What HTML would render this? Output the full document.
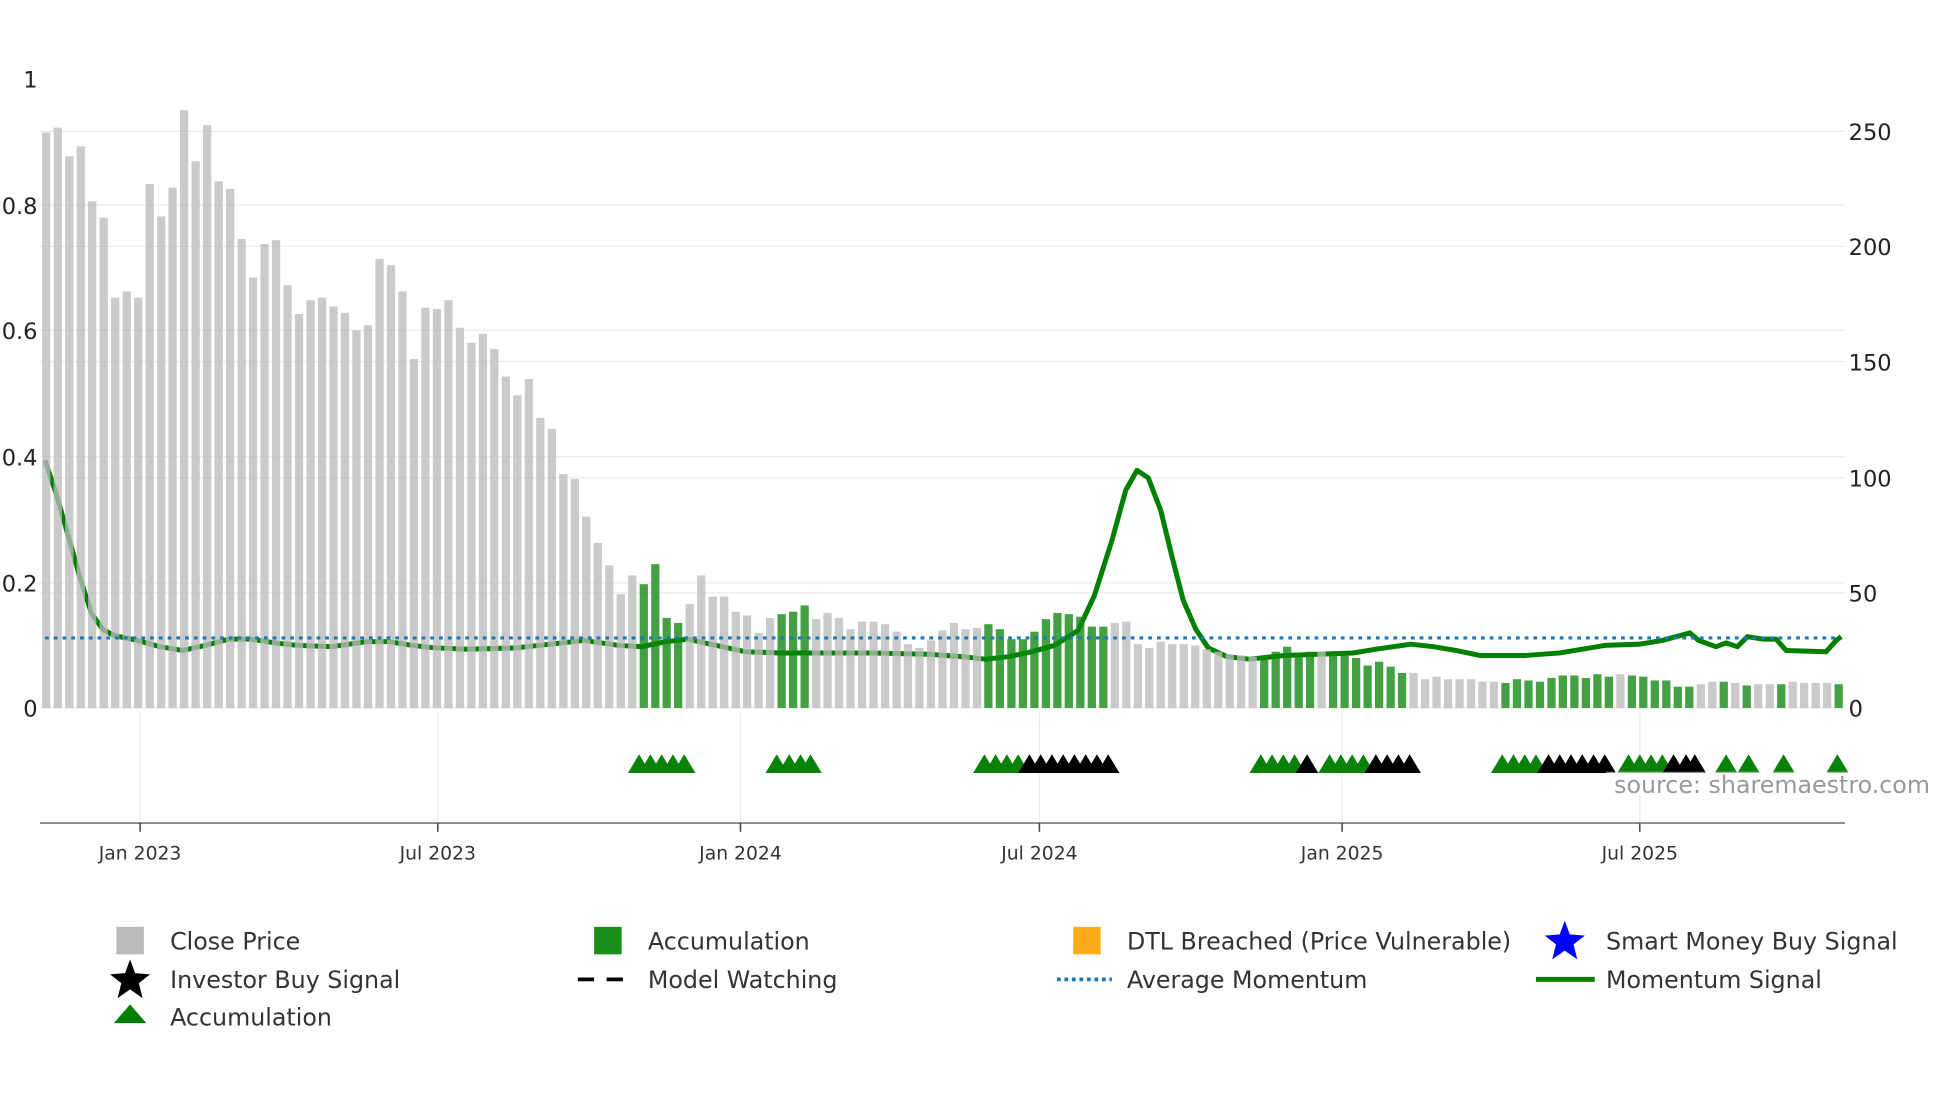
<!DOCTYPE html>
<html><head><meta charset="utf-8"><style>
html,body{margin:0;padding:0;background:#fff;width:1960px;height:1102px;overflow:hidden}
svg{display:block}
text{font-family:"DejaVu Sans","Liberation Sans",sans-serif}
</style></head><body>
<svg id="s" width="1960" height="1102" viewBox="0 0 1567 881" xmlns="http://www.w3.org/2000/svg">
<rect width="1567" height="881" fill="#fff"/>
<g stroke="#ebebeb" stroke-width="1">
<line x1="32" x2="1475" y1="164" y2="164"/><line x1="32" x2="1475" y1="264" y2="264"/>
<line x1="32" x2="1475" y1="365" y2="365"/><line x1="32" x2="1475" y1="466" y2="466"/>
<line x1="32" x2="1475" y1="105" y2="105"/><line x1="32" x2="1475" y1="197" y2="197"/>
<line x1="32" x2="1475" y1="289" y2="289"/><line x1="32" x2="1475" y1="382" y2="382"/>
<line x1="32" x2="1475" y1="474" y2="474"/><line x1="32" x2="1475" y1="566" y2="566"/>
<line x1="112" x2="112" y1="570" y2="658"/><line x1="350" x2="350" y1="570" y2="658"/>
<line x1="592" x2="592" y1="570" y2="658"/><line x1="831" x2="831" y1="570" y2="658"/>
<line x1="1073" x2="1073" y1="570" y2="658"/><line x1="1311" x2="1311" y1="570" y2="658"/>
</g>
<g font-size="18" fill="#222">
<text x="30" y="70" text-anchor="end">1</text>
<text x="30" y="171" text-anchor="end">0.8</text>
<text x="30" y="271" text-anchor="end">0.6</text>
<text x="30" y="372" text-anchor="end">0.4</text>
<text x="30" y="473" text-anchor="end">0.2</text>
<text x="30" y="573" text-anchor="end">0</text>
<text x="1478" y="112">250</text><text x="1478" y="204">200</text>
<text x="1478" y="296">150</text><text x="1478" y="389">100</text>
<text x="1478" y="481">50</text><text x="1478" y="573">0</text>
</g>
<polyline id="mom" fill="none" stroke="#008000" stroke-width="4" stroke-linejoin="round"/>
<g id="bars" opacity="0.78"></g>
<line x1="36" x2="1470" y1="510" y2="510" stroke="#1f77b4" stroke-width="2.5" stroke-dasharray="3,4"/>
<g id="tri"></g>
<rect x="1284" y="617" width="262" height="20" fill="#fff" opacity="0.55"/>
<text x="1543" y="634" text-anchor="end" font-size="19" fill="#999">source: sharemaestro.com</text>
<line x1="32" x2="1475" y1="658" y2="658" stroke="#888" stroke-width="1.5"/>
<g stroke="#444" stroke-width="1.2">
<line x1="112" x2="112" y1="658" y2="665"/><line x1="350" x2="350" y1="658" y2="665"/>
<line x1="592" x2="592" y1="658" y2="665"/><line x1="831" x2="831" y1="658" y2="665"/>
<line x1="1073" x2="1073" y1="658" y2="665"/><line x1="1311" x2="1311" y1="658" y2="665"/>
</g>
<g font-size="15" fill="#333" text-anchor="middle">
<text x="112" y="687">Jan 2023</text><text x="350" y="687">Jul 2023</text>
<text x="592" y="687">Jan 2024</text><text x="831" y="687">Jul 2024</text>
<text x="1073" y="687">Jan 2025</text><text x="1311" y="687">Jul 2025</text>
</g>
<g font-size="19" fill="#333">
<rect x="93" y="741" width="22" height="22" fill="#bbb"/><text x="136" y="759">Close Price</text>
<rect x="475" y="741" width="22" height="22" fill="#1a8f1a"/><text x="518" y="759">Accumulation</text>
<rect x="858" y="741" width="22" height="22" fill="#ffab1c"/><text x="901" y="759">DTL Breached (Price Vulnerable)</text>
<polygon points="1251,736 1255,747 1267,748 1258,755 1261,767 1251,760 1241,767 1244,755 1235,748 1247,747" fill="#0000ff"/>
<text x="1284" y="759">Smart Money Buy Signal</text>
<polygon points="104,767 108,778 120,779 111,786 114,798 104,791 94,798 97,786 88,779 100,778" fill="#000"/>
<text x="136" y="790">Investor Buy Signal</text>
<line x1="462" x2="506" y1="783" y2="783" stroke="#000" stroke-width="3" stroke-dasharray="13,10"/>
<text x="518" y="790">Model Watching</text>
<line x1="845" x2="889" y1="783" y2="783" stroke="#1f77b4" stroke-width="3" stroke-dasharray="3,3"/>
<text x="901" y="790">Average Momentum</text>
<line x1="1228" x2="1275" y1="783" y2="783" stroke="#008000" stroke-width="4"/>
<text x="1284" y="790">Momentum Signal</text>
<polygon points="104,803 117,818 91,818" fill="#008000"/>
<text x="136" y="820">Accumulation</text>
</g>
</svg>
<script>
var d=[106,102,125,117,161,174,238,233,238,147,173,150,88,129,100,145,151,191,222,195,192,228,251,240,238,245,250,264,260,207,212,233,287,246,247,240,262,274,267,279,301,316,303,334,343,379,383,413,434,452,475,460,"g467","g451","g494","g498",483,460,477,477,489,492,506,494,"g491","g489","g484",495,490,494,503,497,497,499,505,515,518,512,504,498,503,502,"g499","g503","g511","g511","g505","g495","g490","g491","g493","g501","g501",498,497,515,518,513,515,515,516,519,521,523,524,525,"g524","g521","g517","g522","g521",521,"g523","g523","g526","g532","g529","g533","g538",538,543,541,543,543,543,545,545,"g546","g543","g544","g545","g542","g540","g540","g542","g539","g541",539,"g540","g541","g544","g544","g549","g549",547,545,"g545",546,"g548",547,547,"g547",545,546,546,546,"g547"];
var n=d.length,x0=37,x1=1470,sp=(x1-x0)/(n-1),h='';
for(var i=0;i<n;i++){var v=d[i],g=false;if(typeof v=='string'){g=true;v=+v.slice(1);}
var x=x0+i*sp;h+='<rect x="'+(x-3.3).toFixed(1)+'" y="'+v+'" width="6.6" height="'+(566-v)+'" fill="'+(g?'#0f870f':'#bcbcbc')+'"/>';}
document.getElementById('bars').innerHTML=h;
var m="36,368 45,395 55,430 64,462 73,490 82,503 91,508 110,512 128,517 146,520 164,516 183,511 201,511 220,514 238,516 265,517 293,513 311,513 330,516 348,518 375,519 412,518 440,515 467,512 495,516 513,517 532,513 550,511 568,515 596,521 623,522 660,522 697,522 742,523 770,525 788,527 806,525 825,521 843,516 862,504 875,476 889,432 900,392 909,376 918,382 928,408 937,445 946,480 956,503 966,518 981,525 999,527 1027,524 1054,523 1082,522 1100,519 1128,515 1146,517 1164,520 1183,524 1220,524 1247,522 1283,516 1311,515 1329,512 1351,506 1358,512 1372,517 1380,514 1389,517 1397,509 1410,511 1420,511 1428,520 1460,521 1468,512 1472,509";
document.getElementById('mom').setAttribute('points',m);
var G='#0a820a',K='#000',t=[[511,G],[520,G],[529,G],[538,G],[547,G],[621,G],[631,G],[640,G],[648,G],
[787,G],[796,G],[805,G],[814,G],[823,K],[832,K],[841,K],[850,K],[859,K],[868,K],[877,K],[886,K],
[1008,G],[1017,G],[1026,G],[1035,G],[1045,K],[1063,G],[1072,G],[1081,G],[1090,G],[1100,K],[1109,K],[1118,K],[1127,K],
[1201,G],[1210,G],[1219,G],[1228,G],[1238,K],[1247,K],[1256,K],[1265,K],[1274,K],[1283,K],[1302,G],[1311,G],[1320,G],[1329,G],[1338,K],[1348,K],[1355,K],
[1380,G],[1398,G],[1426,G],[1469,G]],s='';
t.forEach(function(a){s+='<polygon points="'+a[0]+',603 '+(a[0]+9)+',618 '+(a[0]-9)+',618" fill="'+a[1]+'"/>';});
document.getElementById('tri').innerHTML=s;
</script>
</body></html>
